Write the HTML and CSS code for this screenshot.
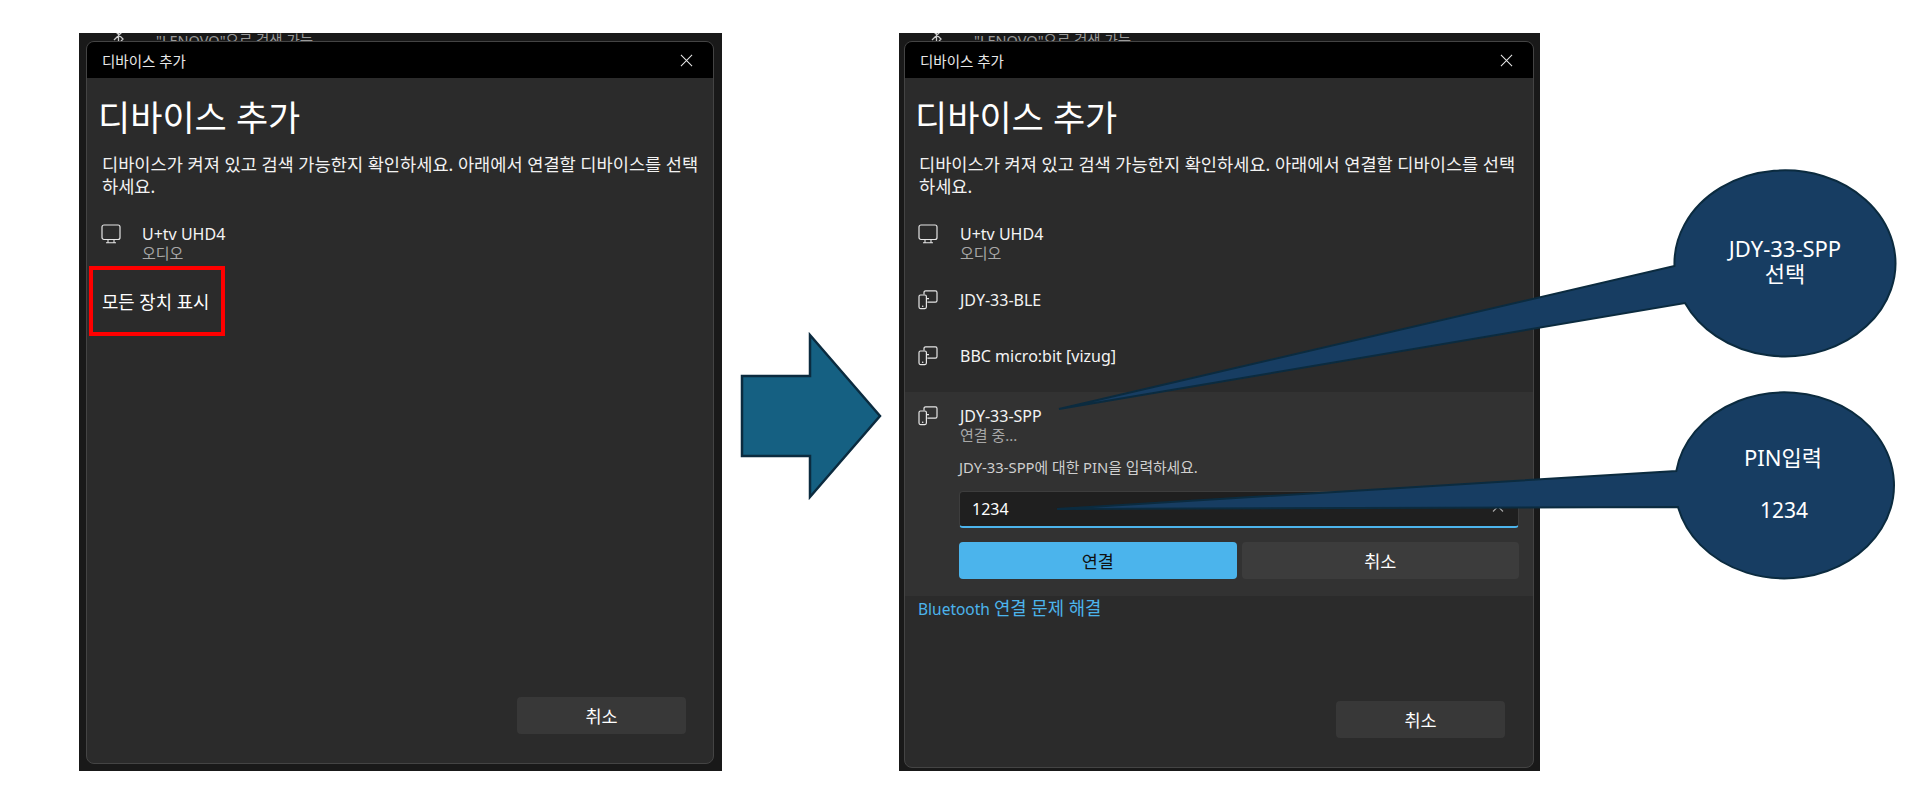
FILE: index.html
```html
<!DOCTYPE html>
<html lang="ko">
<head>
    <meta charset="UTF-8">
    <title>디바이스 추가</title>
    <link rel="stylesheet" href="styles.css">
</head>
<body>
<svg width="0" height="0" class="defs">
    <symbol id="ico-tv" viewBox="0 0 20 20">
        <rect x="1" y="1" width="18" height="14.5" rx="2" fill="none" stroke="currentColor" stroke-width="1.2"/>
        <path d="M7 15.5v3M13 15.5v3M5 18.8h10" fill="none" stroke="currentColor" stroke-width="1.1"/>
    </symbol>
    <symbol id="ico-pair" viewBox="0 0 20 20">
        <path d="M6 4.5V2.4A1.6 1.6 0 0 1 7.6.8h9.8A1.6 1.6 0 0 1 19 2.4v8.2a1.6 1.6 0 0 1-1.6 1.6H9.4M8.4 8.6h2.6" fill="none" stroke="currentColor" stroke-width="1.2"/>
        <rect x="1" y="5" width="7.4" height="13.6" rx="1.5" fill="none" stroke="currentColor" stroke-width="1.2"/>
        <circle cx="4.7" cy="16.2" r=".8" fill="currentColor"/>
    </symbol>
    <symbol id="ico-bt" viewBox="0 0 12 20">
        <path d="M1 5l9 9-4.5 5V1L10 6l-9 9" fill="none" stroke="currentColor" stroke-width="1.3"/>
    </symbol>
</svg>

<div class="stage">
    <!-- 왼쪽 화면 -->
    <div class="shot shot-left">
        <div class="behind">
            <svg class="bt"><use href="#ico-bt"/></svg>
            <span>"LENOVO"으로 검색 가능</span>
        </div>
        <div class="dlg">
            <div class="titlebar">
                <span>디바이스 추가</span>
                <svg class="close" viewBox="0 0 14 14"><path d="M1 1l12 12M13 1L1 13"/></svg>
            </div>
            <div class="body">
                <h1>디바이스 추가</h1>
                <p class="desc">디바이스가 켜져 있고 검색 가능한지 확인하세요. 아래에서 연결할 디바이스를 선택<br>하세요.</p>
                <div class="dev dev-first">
                    <svg class="ico"><use href="#ico-tv"/></svg>
                    <div>
                        <div class="name">U+tv UHD4</div>
                        <div class="sub">오디오</div>
                    </div>
                </div>
                <div class="show-all">모든 장치 표시</div>
            </div>
            <div class="foot"><div class="btn btn-foot">취소</div></div>
        </div>
    </div>

    <!-- 오른쪽 화면 -->
    <div class="shot shot-right">
        <div class="behind">
            <svg class="bt"><use href="#ico-bt"/></svg>
            <span>"LENOVO"으로 검색 가능</span>
        </div>
        <div class="dlg">
            <div class="titlebar">
                <span>디바이스 추가</span>
                <svg class="close" viewBox="0 0 14 14"><path d="M1 1l12 12M13 1L1 13"/></svg>
            </div>
            <div class="body">
                <h1>디바이스 추가</h1>
                <p class="desc">디바이스가 켜져 있고 검색 가능한지 확인하세요. 아래에서 연결할 디바이스를 선택<br>하세요.</p>
                <div class="dev dev-first">
                    <svg class="ico"><use href="#ico-tv"/></svg>
                    <div>
                        <div class="name">U+tv UHD4</div>
                        <div class="sub">오디오</div>
                    </div>
                </div>
                <div class="dev dev-plain dev-gap">
                    <svg class="ico"><use href="#ico-pair"/></svg>
                    <div class="name">JDY-33-BLE</div>
                </div>
                <div class="dev dev-plain">
                    <svg class="ico"><use href="#ico-pair"/></svg>
                    <div class="name">BBC micro:bit [vizug]</div>
                </div>
                <div class="pairing">
                    <div class="dev">
                        <svg class="ico"><use href="#ico-pair"/></svg>
                        <div>
                            <div class="name">JDY-33-SPP</div>
                            <div class="sub">연결 중...</div>
                        </div>
                    </div>
                    <div class="pin-form">
                        <div class="prompt">JDY-33-SPP에 대한 PIN을 입력하세요.</div>
                        <div class="pin-input">
                            <span>1234</span>
                            <svg class="chev" viewBox="0 0 12 8"><path d="M1 6.5l5-5 5 5"/></svg>
                        </div>
                        <div class="btn-row">
                            <div class="btn btn-primary">연결</div>
                            <div class="btn btn-second">취소</div>
                        </div>
                    </div>
                </div>
                <div class="link">Bluetooth <span class="link-ko">연결 문제 해결</span></div>
            </div>
            <div class="foot"><div class="btn btn-foot">취소</div></div>
        </div>
    </div>
</div>

<!-- 화살표, 말풍선 -->
<svg class="marks" viewBox="0 0 1931 810">
    <path class="arrow" d="M742 376H810V335L880 416 810 497V456H742Z"/>
    <path class="bubble" d="M1059 409L1674.5 266A110.5 93 0 1 1 1685 303Z"/>
    <path class="bubble" d="M1057 509L1676.3 471A109.5 93 0 1 1 1678 507Z"/>
    <text class="bubble-txt" x="1785" y="257">JDY-33-SPP</text>
    <text class="bubble-txt" x="1785" y="282">선택</text>
    <text class="bubble-txt" x="1783" y="466">PIN입력</text>
    <text class="bubble-txt bubble-num" x="1784" y="518">1234</text>
</svg>
</body>
</html>
```
FILE: styles.css
```css
* {
    margin: 0;
    padding: 0;
    box-sizing: border-box;
}
html, body {
    height: 810px;
    overflow: hidden;
    background: #fff;
    font-family: "Noto Sans", "Noto Sans CJK KR", sans-serif;
}
.defs {
    position: absolute;
}
.stage {
    display: flex;
    gap: 177px;
    padding: 33px 0 0 79px;
}
.shot {
    height: 738px;
    background: #191919;
    display: flex;
    flex-direction: column;
}
.shot-left {
    width: 643px;
    padding: 0 8px 7px 7px;
}
.shot-right {
    width: 641px;
    padding: 0 6px 3px 5px;
}
.behind {
    height: 8px;
    flex: none;
    overflow: hidden;
    display: flex;
    align-items: flex-start;
    gap: 31px;
    padding-left: 27px;
    color: #9a9a9a;
    font-size: 14.5px;
    line-height: 15px;
}
.bt {
    width: 12px;
    height: 20px;
    margin-top: -8px;
    color: #ccc;
}
.dlg {
    flex: 1;
    display: flex;
    flex-direction: column;
    background: #2b2b2b;
    border: 1px solid #444;
    border-radius: 8px;
    overflow: hidden;
    color: #fff;
}
.titlebar {
    height: 36px;
    flex: none;
    background: #000;
    display: flex;
    align-items: center;
    justify-content: space-between;
    padding: 0 20px 0 15px;
    font-size: 14.5px;
    color: #e8e8e8;
}
.close {
    width: 13px;
    height: 13px;
}
.close path {
    stroke: #e8e8e8;
    stroke-width: 1.1;
    fill: none;
}
.body {
    flex: 1;
    padding: 0 15px;
    display: flex;
    flex-direction: column;
}
h1 {
    font-size: 35px;
    font-weight: 400;
    line-height: 46px;
    margin: 17px 0 0 -4px;
}
.desc {
    font-size: 17.6px;
    line-height: 22px;
    margin-top: 12px;
    color: #f2f2f2;
    white-space: nowrap;
}
.dev {
    display: flex;
    align-items: flex-start;
}
.dev-first {
    margin-top: 27px;
}
.dev-plain {
    height: 56px;
    align-items: center;
}
.dev-gap {
    margin-top: 10px;
}
.ico {
    width: 20px;
    height: 20px;
    margin: 0 21px 0 -1px;
    flex: none;
    color: #e6e6e6;
}
.name {
    font-size: 16px;
    line-height: 20px;
    color: #f4f4f4;
}
.sub {
    font-size: 15px;
    line-height: 18px;
    color: #a8a8a8;
}
.show-all {
    width: 136px;
    height: 70px;
    margin: 4px 0 0 -13px;
    padding: 0 0 0 9px;
    border: 4px solid #f00;
    display: flex;
    align-items: center;
    font-size: 17.8px;
    white-space: nowrap;
}
.shot-right h1 {
    margin-left: -5px;
}
.shot-right .desc {
    margin-left: -1px;
}
.shot-right .ico {
    margin: 0 22px 0 -2px;
}
.pairing {
    margin: 8px -15px 0;
    padding: 14px 14px 0 15px;
    height: 204px;
    background: #323232;
}
.pin-form {
    padding-left: 39px;
}
.prompt {
    font-size: 14.8px;
    line-height: 18px;
    margin-top: 14px;
    color: #cfcfcf;
}
.pin-input {
    height: 37px;
    margin-top: 15px;
    background: #1f1f1f;
    border: 1px solid #3d3d3d;
    border-bottom: 2px solid #4cb4ec;
    border-radius: 4px;
    display: flex;
    align-items: center;
    justify-content: space-between;
    padding: 0 14px 0 12px;
    font-size: 16px;
}
.chev {
    width: 12px;
    height: 8px;
}
.chev path {
    stroke: #aaa;
    stroke-width: 1.1;
    fill: none;
}
.btn-row {
    display: flex;
    gap: 5px;
    margin-top: 14px;
}
.btn {
    height: 37px;
    display: flex;
    align-items: center;
    justify-content: center;
    border-radius: 4px;
    font-size: 17.5px;
}
.btn-row .btn {
    flex: 1;
}
.btn-primary {
    background: #4bb4ec;
    color: #111;
}
.btn-second {
    background: #3c3c3c;
}
.btn-foot {
    width: 169px;
    background: #383838;
}
.link {
    font-size: 15.5px;
    line-height: 22px;
    margin: 1px 0 0 -2px;
    color: #4cb4ec;
}
.link-ko {
    font-size: 17.8px;
}
.foot {
    display: flex;
    justify-content: flex-end;
    padding: 0 28px 29px 0;
}
.shot-left .foot {
    padding-right: 27px;
}
.marks {
    position: absolute;
    left: 0;
    top: 0;
    width: 1931px;
    height: 810px;
}
.arrow {
    fill: #156082;
    stroke: #0b2b3f;
    stroke-width: 2.5;
}
.bubble {
    fill: #173d62;
    stroke: #0b2b3f;
    stroke-width: 2;
}
.bubble-txt {
    fill: #fff;
    font-size: 22px;
    text-anchor: middle;
}
.bubble-num {
    font-size: 21px;
}
```
